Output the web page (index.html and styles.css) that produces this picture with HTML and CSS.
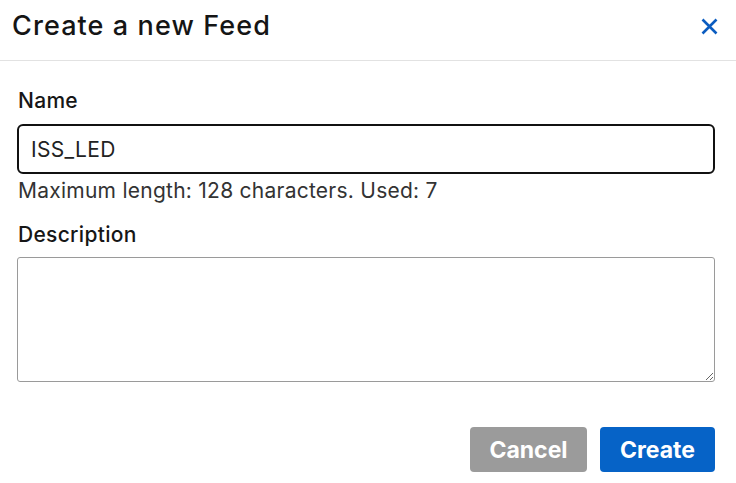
FILE: index.html
```html
<!DOCTYPE html>
<html>
<head>
<meta charset="utf-8">
<link rel="stylesheet" href="styles.css">
</head>
<body>
<div class="modal">
  <div class="header">
    <h1 class="title">Create a new Feed</h1>
    <button class="close" aria-label="Close">
      <svg width="17" height="17" viewBox="0 0 17 17"><path d="M1.5 1.5 L15.5 15.5 M15.5 1.5 L1.5 15.5" stroke="#0b5cc0" stroke-width="2.6" stroke-linecap="butt"/></svg>
    </button>
  </div>
  <div class="body">
    <label class="label">Name</label>
    <div class="input">ISS_LED</div>
    <div class="help">Maximum length: 128 characters. Used: 7</div>
    <label class="label desc-label">Description</label>
    <textarea class="textarea"></textarea>
    <div class="actions">
      <button class="btn cancel">Cancel</button>
      <button class="btn create">Create</button>
    </div>
  </div>
</div>
</body>
</html>
```

FILE: styles.css
```css
* { box-sizing: border-box; }
html, body { margin: 0; padding: 0; background: #fff; }
body { font-family: Inter, Lato, sans-serif; color: #111; width: 736px; height: 483px; overflow: hidden; }
.header {
  height: 61px;
  border-bottom: 1px solid #e2e2e2;
  display: flex;
  align-items: center;
  justify-content: space-between;
  padding: 0 18px 8px 12px;
}
.title { margin: 0; font-size: 27px; font-weight: 500; letter-spacing: 1.1px; line-height: 34px; color: #151515; }
.close { background: none; border: 0; padding: 0; display: flex; }
.body { padding: 28px 21px 0 17px; }
.label { display: block; font-size: 21px; font-weight: 500; color: #161616; margin-left: 1px; line-height: 24px; letter-spacing: 0.3px; }
.input {
  margin-top: 11px;
  height: 50px;
  border: 2px solid #111;
  border-radius: 6px;
  padding: 0 12px;
  display: flex;
  align-items: center;
  font-size: 21px;
  letter-spacing: 0.3px;
  color: #222;
}
.help { font-size: 21px; color: #333; margin-top: 4px; margin-left: 1px; line-height: 26px; letter-spacing: 0.25px; }
.desc-label { margin-top: 19px; }
.textarea {
  display: block;
  margin-top: 10px;
  width: 100%;
  height: 125px;
  border: 1px solid #9a9a9a;
  border-radius: 3px;
  resize: vertical;
}
.actions { display: flex; justify-content: flex-end; gap: 13px; margin-top: 45px; }
.btn {
  height: 45px;
  border: 0;
  border-radius: 4px;
  color: #fff;
  font-family: Inter, Lato, sans-serif;
  font-size: 23px;
  font-weight: 700;
  padding: 0 10px;
}
.cancel { background: #9b9b9b; width: 117px; }
.create { background: #0663c7; width: 115px; }
```
